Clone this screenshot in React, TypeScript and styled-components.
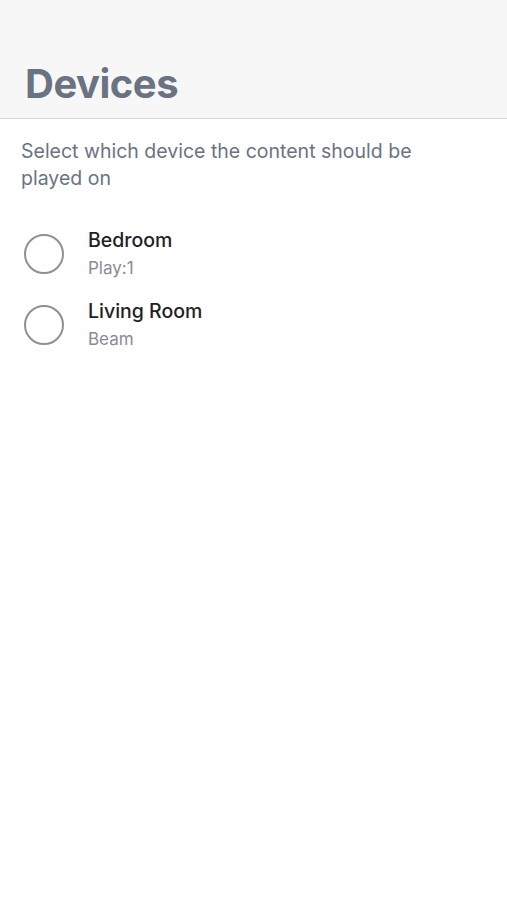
import * as React from 'react';
import styled, { createGlobalStyle } from 'styled-components';

const GlobalStyle = createGlobalStyle`
	body {
		margin: 0;
		background: #ffffff;
		font-family: Inter, "Noto Sans", sans-serif;
	}
`;

interface IDevice {
	name: string;
	model: string;
}

const devices: IDevice[] = [
	{ name: 'Bedroom', model: 'Play:1' },
	{ name: 'Living Room', model: 'Beam' },
];

const App: React.FunctionComponent = () => {
	return (
		<Page>
			<GlobalStyle />
			<Header>
				<Title>Devices</Title>
			</Header>
			<Intro>Select which device the content should be played on</Intro>
			<List>
				{devices.map(device => (
					<Row key={device.name}>
						<Radio />
						<Labels>
							<Name>{device.name}</Name>
							<Model>{device.model}</Model>
						</Labels>
					</Row>
				))}
			</List>
		</Page>
	);
};

export default App;

const Page = styled.div`
	width: 507px;
	min-height: 900px;
	background: #ffffff;
`;

const Header = styled.header`
	height: 119px;
	background: #f7f7f7;
	border-bottom: 1px solid #d8d8da;
	display: flex;
	align-items: flex-end;
	padding: 0 0 14px 25px;
	box-sizing: border-box;
`;

const Title = styled.h1`
	margin: 0;
	font-size: 40px;
	font-weight: 700;
	color: #6a7382;
	letter-spacing: -0.5px;
	line-height: 1;
`;

const Intro = styled.p`
	margin: 0;
	padding: 19px 60px 0 21px;
	font-size: 19.5px;
	line-height: 27px;
	color: #6a7382;
`;

const List = styled.div`
	display: flex;
	flex-direction: column;
	gap: 20px;
	padding: 36px 0 0 24px;
`;

const Row = styled.div`
	display: flex;
	align-items: center;
	gap: 24px;
`;

const Radio = styled.span`
	width: 36px;
	height: 36px;
	border: 2px solid #8e9096;
	border-radius: 50%;
	flex-shrink: 0;
`;

const Labels = styled.div`
	display: flex;
	flex-direction: column;
	gap: 5px;
`;

const Name = styled.span`
	font-size: 19.5px;
	font-weight: 500;
	line-height: 24px;
	color: #1e2126;
`;

const Model = styled.span`
	font-size: 17px;
	line-height: 22px;
	color: #878c96;
`;
